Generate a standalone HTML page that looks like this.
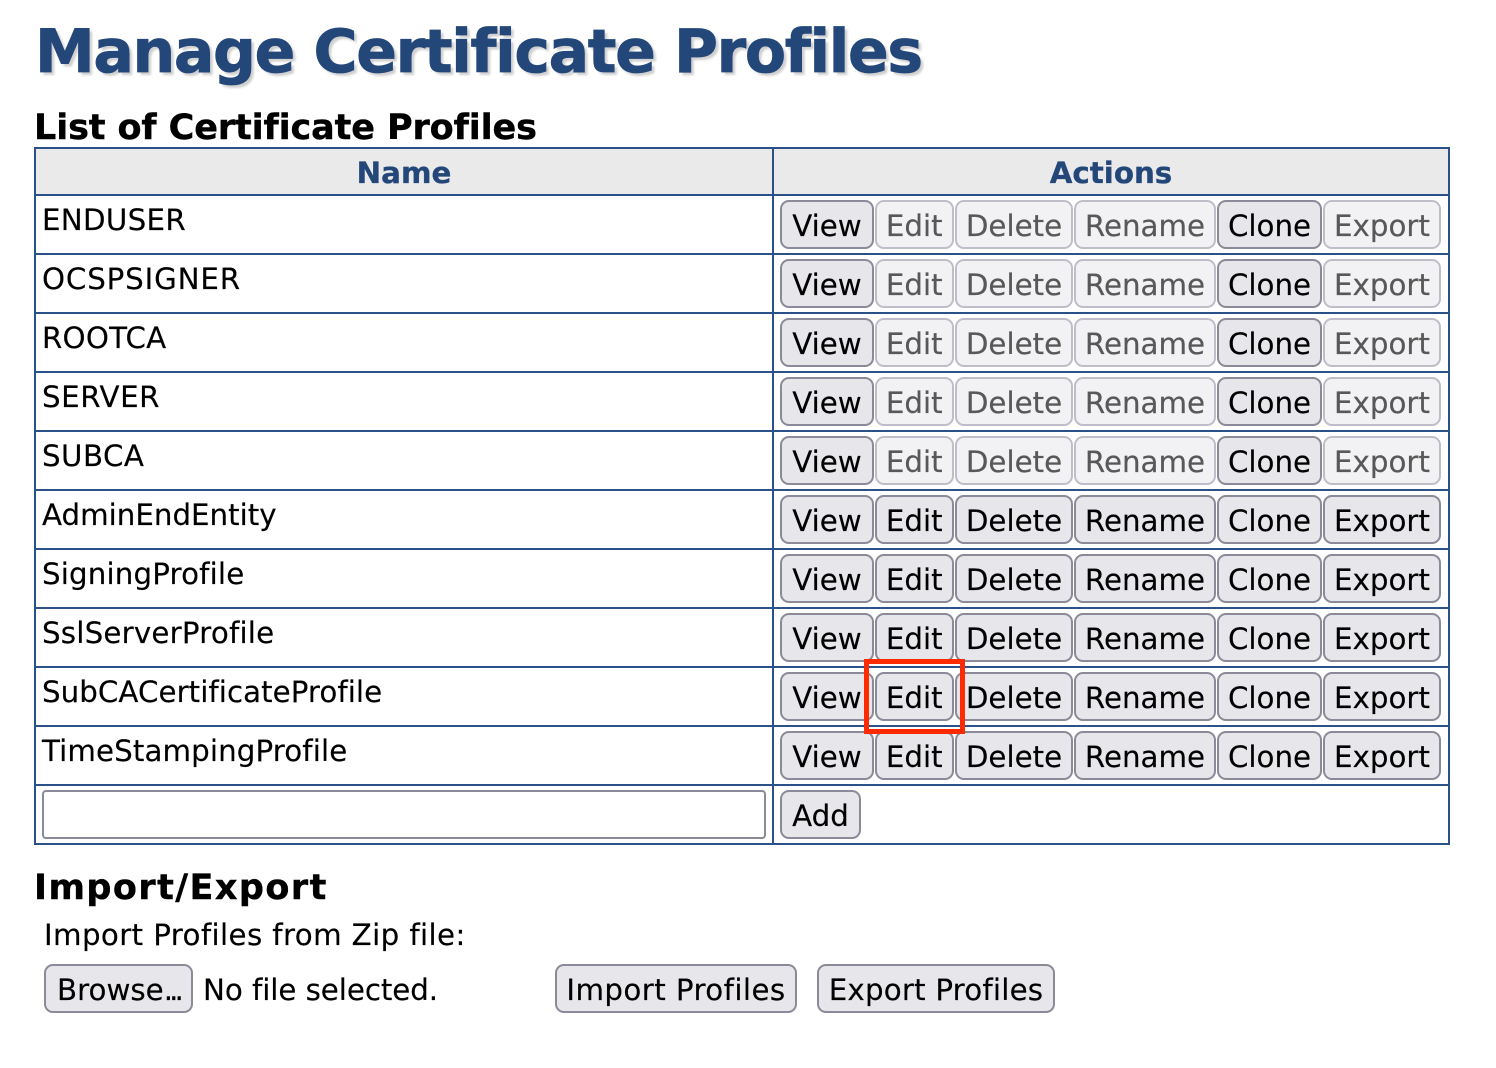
<!DOCTYPE html>
<html><head><meta charset="utf-8"><style>
html,body{margin:0;padding:0;background:#fff;width:1496px;height:1068px;overflow:hidden}
body{font-family:"DejaVu Sans",sans-serif;color:#000;position:relative}
div{position:absolute;white-space:nowrap}
.title{left:35px;top:14px;font-size:60px;line-height:76px;font-weight:bold;color:#24477a;letter-spacing:-1.34px;-webkit-text-stroke:0.8px #24477a;text-shadow:3px 3px 2px #cfcfcf}
.h2{font-size:35px;line-height:44px;font-weight:bold;-webkit-text-stroke:0.4px #000}
.line{background:#2b5288}
.th{top:149px;height:45px;background:#eaeaea;text-align:center;font-size:29.3px;line-height:47px;font-weight:bold;color:#24477a;-webkit-text-stroke:0.3px #24477a}
.th span{position:relative;top:1px}
.nm{left:42px;font-size:29.3px;line-height:36px;-webkit-text-stroke:0.15px #000}
.b{box-sizing:border-box;height:49px;border:2px solid #8b8a98;border-radius:9px;background:#e7e6eb;font-size:29.3px;line-height:48px;text-align:center;color:#000;-webkit-text-stroke:0.15px #000}
.d{border-color:#bfbec8;background:#f2f2f5;color:#585858;-webkit-text-stroke:0.2px #585858}
.t{font-size:29.3px;line-height:36px;-webkit-text-stroke:0.15px #000}
</style></head><body>
<div class="title">Manage Certificate Profiles</div>
<div class="h2" style="left:34px;top:106px;letter-spacing:-0.11px">List of Certificate Profiles</div>

<div class="th" style="left:36px;width:736px"><span>Name</span></div>
<div class="th" style="left:774px;width:674px"><span>Actions</span></div>

<div class="line" style="left:34px;top:147px;width:1416px;height:2px"></div>
<div class="line" style="left:34px;top:194px;width:1416px;height:2px"></div>
<div class="line" style="left:34px;top:253px;width:1416px;height:2px"></div>
<div class="line" style="left:34px;top:312px;width:1416px;height:2px"></div>
<div class="line" style="left:34px;top:371px;width:1416px;height:2px"></div>
<div class="line" style="left:34px;top:430px;width:1416px;height:2px"></div>
<div class="line" style="left:34px;top:489px;width:1416px;height:2px"></div>
<div class="line" style="left:34px;top:548px;width:1416px;height:2px"></div>
<div class="line" style="left:34px;top:607px;width:1416px;height:2px"></div>
<div class="line" style="left:34px;top:666px;width:1416px;height:2px"></div>
<div class="line" style="left:34px;top:725px;width:1416px;height:2px"></div>
<div class="line" style="left:34px;top:784px;width:1416px;height:2px"></div>
<div class="line" style="left:34px;top:843px;width:1416px;height:2px"></div>
<div class="line" style="left:34px;top:147px;width:2px;height:698px"></div>
<div class="line" style="left:772px;top:147px;width:2px;height:698px"></div>
<div class="line" style="left:1448px;top:147px;width:2px;height:698px"></div>

<div class="nm" style="top:202px;letter-spacing:.3px">ENDUSER</div>
<div class="nm" style="top:261px;letter-spacing:.85px">OCSPSIGNER</div>
<div class="nm" style="top:320px;letter-spacing:.2px">ROOTCA</div>
<div class="nm" style="top:379px;letter-spacing:.55px">SERVER</div>
<div class="nm" style="top:438px;letter-spacing:.45px">SUBCA</div>
<div class="nm" style="top:497px">AdminEndEntity</div>
<div class="nm" style="top:556px;letter-spacing:.15px">SigningProfile</div>
<div class="nm" style="top:615px;letter-spacing:.2px">SslServerProfile</div>
<div class="nm" style="top:674px;letter-spacing:.05px">SubCACertificateProfile</div>
<div class="nm" style="top:733px;letter-spacing:.11px">TimeStampingProfile</div>

<div class="b" style="left:780px;top:200px;width:94px">View</div><div class="b d" style="left:875px;top:200px;width:78.5px">Edit</div><div class="b d" style="left:955px;top:200px;width:118px">Delete</div><div class="b d" style="left:1074px;top:200px;width:142px">Rename</div><div class="b" style="left:1217px;top:200px;width:105px">Clone</div><div class="b d" style="left:1323px;top:200px;width:118px">Export</div>
<div class="b" style="left:780px;top:259px;width:94px">View</div><div class="b d" style="left:875px;top:259px;width:78.5px">Edit</div><div class="b d" style="left:955px;top:259px;width:118px">Delete</div><div class="b d" style="left:1074px;top:259px;width:142px">Rename</div><div class="b" style="left:1217px;top:259px;width:105px">Clone</div><div class="b d" style="left:1323px;top:259px;width:118px">Export</div>
<div class="b" style="left:780px;top:318px;width:94px">View</div><div class="b d" style="left:875px;top:318px;width:78.5px">Edit</div><div class="b d" style="left:955px;top:318px;width:118px">Delete</div><div class="b d" style="left:1074px;top:318px;width:142px">Rename</div><div class="b" style="left:1217px;top:318px;width:105px">Clone</div><div class="b d" style="left:1323px;top:318px;width:118px">Export</div>
<div class="b" style="left:780px;top:377px;width:94px">View</div><div class="b d" style="left:875px;top:377px;width:78.5px">Edit</div><div class="b d" style="left:955px;top:377px;width:118px">Delete</div><div class="b d" style="left:1074px;top:377px;width:142px">Rename</div><div class="b" style="left:1217px;top:377px;width:105px">Clone</div><div class="b d" style="left:1323px;top:377px;width:118px">Export</div>
<div class="b" style="left:780px;top:436px;width:94px">View</div><div class="b d" style="left:875px;top:436px;width:78.5px">Edit</div><div class="b d" style="left:955px;top:436px;width:118px">Delete</div><div class="b d" style="left:1074px;top:436px;width:142px">Rename</div><div class="b" style="left:1217px;top:436px;width:105px">Clone</div><div class="b d" style="left:1323px;top:436px;width:118px">Export</div>
<div class="b" style="left:780px;top:495px;width:94px">View</div><div class="b" style="left:875px;top:495px;width:78.5px">Edit</div><div class="b" style="left:955px;top:495px;width:118px">Delete</div><div class="b" style="left:1074px;top:495px;width:142px">Rename</div><div class="b" style="left:1217px;top:495px;width:105px">Clone</div><div class="b" style="left:1323px;top:495px;width:118px">Export</div>
<div class="b" style="left:780px;top:554px;width:94px">View</div><div class="b" style="left:875px;top:554px;width:78.5px">Edit</div><div class="b" style="left:955px;top:554px;width:118px">Delete</div><div class="b" style="left:1074px;top:554px;width:142px">Rename</div><div class="b" style="left:1217px;top:554px;width:105px">Clone</div><div class="b" style="left:1323px;top:554px;width:118px">Export</div>
<div class="b" style="left:780px;top:613px;width:94px">View</div><div class="b" style="left:875px;top:613px;width:78.5px">Edit</div><div class="b" style="left:955px;top:613px;width:118px">Delete</div><div class="b" style="left:1074px;top:613px;width:142px">Rename</div><div class="b" style="left:1217px;top:613px;width:105px">Clone</div><div class="b" style="left:1323px;top:613px;width:118px">Export</div>
<div class="b" style="left:780px;top:672px;width:94px">View</div><div class="b" style="left:875px;top:672px;width:78.5px">Edit</div><div class="b" style="left:955px;top:672px;width:118px">Delete</div><div class="b" style="left:1074px;top:672px;width:142px">Rename</div><div class="b" style="left:1217px;top:672px;width:105px">Clone</div><div class="b" style="left:1323px;top:672px;width:118px">Export</div>
<div class="b" style="left:780px;top:731px;width:94px">View</div><div class="b" style="left:875px;top:731px;width:78.5px">Edit</div><div class="b" style="left:955px;top:731px;width:118px">Delete</div><div class="b" style="left:1074px;top:731px;width:142px">Rename</div><div class="b" style="left:1217px;top:731px;width:105px">Clone</div><div class="b" style="left:1323px;top:731px;width:118px">Export</div>

<div style="left:42px;top:790px;width:724px;height:49px;box-sizing:border-box;border:2px solid #8b8a98;border-radius:4px;background:#fff"></div>
<div class="b" style="left:780px;top:790px;width:81px">Add</div>

<div style="left:864px;top:659px;width:101px;height:75px;box-sizing:border-box;border:5px solid #ff2a00"></div>

<div class="h2" style="left:34px;top:866px;letter-spacing:1.45px">Import/Export</div>
<div class="t" style="left:44px;top:917px;letter-spacing:.38px">Import Profiles from Zip file:</div>
<div class="b" style="left:44px;top:964px;width:149px">Browse<span style="letter-spacing:-3.9px">...</span></div>
<div class="t" style="left:203px;top:972px;letter-spacing:-.06px">No file selected.</div>
<div class="b" style="left:555px;top:964px;width:242px;letter-spacing:.42px">Import Profiles</div>
<div class="b" style="left:817px;top:964px;width:238px;letter-spacing:.2px">Export Profiles</div>
</body></html>
